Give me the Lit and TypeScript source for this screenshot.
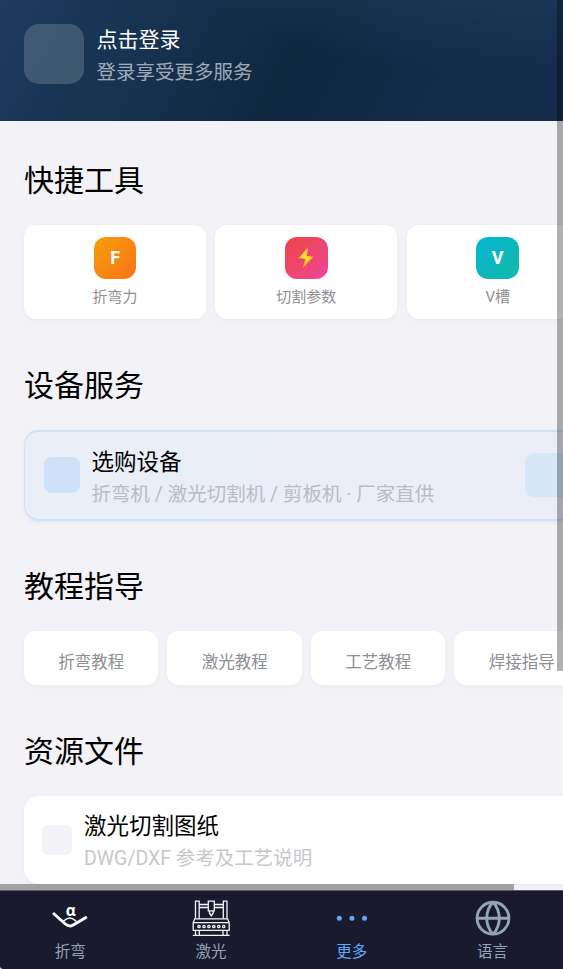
import { LitElement, html, css, svg } from "lit";
import { customElement } from "lit/decorators.js";

const tools = [
  { icon: "F", name: "折弯力", tone: "orange" },
  { icon: "bolt", name: "切割参数", tone: "red" },
  { icon: "V", name: "V槽", tone: "teal" },
];
const guides = ["折弯教程", "激光教程", "工艺教程", "焊接指导"];

const bolt = html`<svg class="bolt" width="16" height="21" viewBox="0 0 16 21">
  <path d="M10 .3 .6 11.1l6.7 1.1L5 20.7l10.5-11-6.7-.8z" fill="#fdc21c" />
  <path d="M9.7 1.5 2 10.5l6.2.7-1 4.8 6.4-6-6-.4z" fill="#ffdf38" />
</svg>`;

const bendIcon = html`<svg width="38" height="38" viewBox="0 0 38 38">
  <path d="M2 14 14.4 25Q18.7 28.8 23 25.6L35.8 18" fill="none" stroke="#fff" stroke-width="2.9" stroke-linejoin="round"/>
  <path d="M12.4 22.3Q18.8 15.6 25.2 22.3" fill="none" stroke="#fff" stroke-width="1.4"/>
  <text x="19.8" y="16.6" text-anchor="middle" class="alpha">α</text>
</svg>`;

const laserIcon = html`<svg width="38" height="38" viewBox="0 0 38 38" fill="none" stroke="#f4f4f8" stroke-width="1.3">
  <path d="M3.5 19.5V2.1H7.2V19.5M31.3 19.5V2.1H35V19.5M7.2 5.5H16.3M22.3 5.5H31.3M7.2 8.5H16.3M22.3 8.5H31.3M16.3 2.1V11.8H22.3V2.1ZM17.5 12V14.2L19.3 16.8 21.1 14.2V12"/>
  <path d="M2.7 19.8H35.6L37.2 23.6V31.4H1.2V23.6ZM1.2 23.6H37.2M3.5 31.4V36M7.3 31.4V36M31 31.4V36M35 31.4V36M.8 36.4H37.6"/>
  ${[7, 12, 16.9, 21.8, 26.8, 31.7].map(x => svg`<circle cx=${x} cy="27.5" r="1.2"/>`)}
</svg>`;

const moreIcon = html`<svg width="38" height="38" viewBox="0 0 38 38" fill="#60a5fa">
  <circle cx="6.3" cy="19.2" r="2.5"/><circle cx="18.9" cy="19.2" r="2.5"/><circle cx="31.5" cy="19.2" r="2.5"/>
</svg>`;

const globeIcon = html`<svg width="38" height="38" viewBox="0 0 38 38" fill="none" stroke="#94a3b8" stroke-width="2.9">
  <circle cx="19" cy="19.2" r="15.9"/><path d="M3 19.2H35M19 3C10.6 12.5 10.6 26 19 35.4M19 3C27.4 12.5 27.4 26 19 35.4"/>
</svg>`;

const tabs = [
  { name: "折弯", icon: bendIcon },
  { name: "激光", icon: laserIcon },
  { name: "更多", icon: moreIcon, active: true },
  { name: "语言", icon: globeIcon },
];

@customElement("app-root")
export class AppRoot extends LitElement {
  static styles = css`
    :host {
      display: flex; flex-direction: column; position: relative;
      width: 100%; height: 969px; overflow: hidden; background: #f2f2f7;
      font-family: Roboto, "Noto Sans CJK SC", sans-serif; font-weight: 400; color: #000;
    }
    * { box-sizing: border-box; }
    svg { display: block; overflow: visible; }
    .page { flex: 1; min-height: 0; overflow: hidden; }
    .header {
      height: 121.4px; padding: 24px; display: flex; gap: 12.5px;
      background:
        radial-gradient(ellipse 340px 165px at 480px -95px, rgba(34, 76, 104, .5), rgba(34, 76, 104, .45) 50%, transparent 100%),
        linear-gradient(118deg, #1e3a5f 0%, #16324f 28%, #0f2741 52%, #112845 64%, #172d4e 100%);
    }
    .avatar { width: 60px; height: 60px; border-radius: 15px; background: rgba(255, 255, 255, .17); }
    .login { font-size: 21px; line-height: 32px; color: #fff; }
    .hint { font-size: 19.5px; line-height: 34px; color: rgba(255, 255, 255, .6); }
    .body { width: 620px; padding: 36px 0 0 24px; display: flex; flex-direction: column; gap: 43.5px; }
    h2 { margin: 0 0 21.5px; padding-top: 1px; font-size: 30px; line-height: 45px; font-weight: inherit; }
    section:nth-child(n+3) { margin-top: -1px; }
    section:nth-child(4) { margin-top: -.6px; }
    .row { display: flex; gap: 9.1px; }
    .tool, .guide, .file { background: #fff; box-shadow: 0 1.5px 4px rgba(0, 0, 0, .03); flex: none; }
    .tool { width: 182.2px; height: 94px; border-radius: 12px; padding-top: 12px; display: flex; flex-direction: column; align-items: center; }
    .badge {
      width: 42.4px; height: 42.4px; border-radius: 12px; display: flex; align-items: center; justify-content: center;
      color: #fff; font-size: 18px; font-weight: 700; padding-bottom: 1px; flex: none;
    }
    .orange { background: linear-gradient(135deg, #f59e0b, #f97316); }
    .red { background: linear-gradient(135deg, #ef4444, #ec4899); }
    .teal { background: linear-gradient(135deg, #06b6d4, #14b8a6); }
    .label { margin-top: 7px; font-size: 15px; line-height: 22px; color: #8e8e93; }
    .shop {
      height: 91px; border: 1.5px solid #cfe1f8; border-width: 2px 2px 2px 1.5px; border-radius: 15px; padding: 0 18.5px; display: flex; align-items: center;
      background: linear-gradient(135deg, #e9eef7, #ecedf7); box-shadow: 0 1.5px 4px rgba(0, 0, 0, .05);
    }
    .thumb { width: 36px; height: 36px; border-radius: 8px; background: #cfe1f8; margin-right: 12px; margin-top: -1px; }
    .copy { flex: 1; padding-top: 6px; }
    .title { font-size: 22.5px; line-height: 33px; }
    .sub { font-size: 19.5px; line-height: 32px; color: #b9bcc4; white-space: nowrap; }
    .buy { width: 75px; height: 44px; border-radius: 9px; background: #d7e6f7; margin-top: -1px; }
    .guide {
      width: 134.4px; height: 54.5px; border-radius: 12px; padding-top: 6px; display: flex; align-items: center; justify-content: center;
      font-size: 16.5px; color: #8e8e93;
    }
    .file { height: 88px; border-radius: 15px; padding: 0 18px; display: flex; align-items: center; }
    .file .thumb { width: 30px; height: 30px; border-radius: 6px; background: #f2f2f7; margin-top: 0; }
    .file .sub { color: #c7c7cc; }
    .tabs { height: 79px; background: #1a1a2e; display: flex; border-top: 1px solid #5a5a64; border-bottom-left-radius: 3px; }
    .tab { flex: 1; display: flex; flex-direction: column; align-items: center; padding-top: 8px; color: #94a3b8; font-size: 15.5px; line-height: 24px; }
    .tab svg { margin-bottom: 3px; }
    .active { color: #60a5fa; }
    .alpha { font: 700 15.5px/1 "Open Sans", sans-serif; fill: #fff; }
    .vbar { position: absolute; right: 0; top: 0; width: 6px; height: 671px; background: rgba(0, 0, 0, .3); }
    .hbar { position: absolute; left: 0; top: 884px; width: 513.5px; height: 6px; background: rgba(0, 0, 0, .33); }
  `;

  render() {
    return html`
      <main class="page">
        <header class="header">
          <div class="avatar"></div>
          <div><div class="login">点击登录</div><div class="hint">登录享受更多服务</div></div>
        </header>
        <div class="body">
          <section><h2>快捷工具</h2><div class="row">
            ${tools.map(t => html`<div class="tool"><div class="badge ${t.tone}">${t.icon === "bolt" ? bolt : t.icon}</div><div class="label">${t.name}</div></div>`)}
          </div></section>
          <section><h2>设备服务</h2><div class="shop">
            <div class="thumb"></div>
            <div class="copy"><div class="title">选购设备</div><div class="sub">折弯机 / 激光切割机 / 剪板机 · 厂家直供</div></div>
            <div class="buy"></div>
          </div></section>
          <section><h2>教程指导</h2><div class="row">${guides.map(g => html`<div class="guide">${g}</div>`)}</div></section>
          <section><h2>资源文件</h2><div class="file">
            <div class="thumb"></div>
            <div class="copy"><div class="title">激光切割图纸</div><div class="sub">DWG/DXF 参考及工艺说明</div></div>
          </div></section>
        </div>
      </main>
      <nav class="tabs">${tabs.map(t => html`<div class="tab ${t.active ? "active" : ""}">${t.icon}<span>${t.name}</span></div>`)}</nav>
      <div class="vbar"></div><div class="hbar"></div>
    `;
  }
}
